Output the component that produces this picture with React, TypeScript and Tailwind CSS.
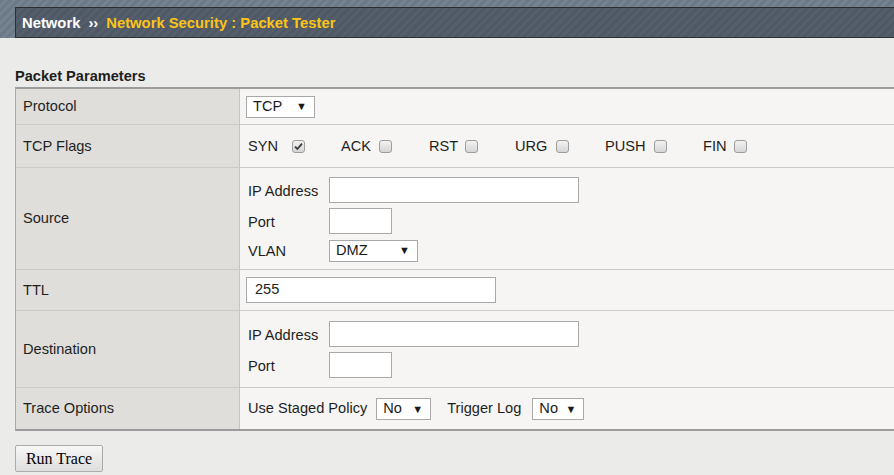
import React from "react";

const flags = [
  { name: "SYN", labelW: "w-[44px]", itemW: "w-[93px]", checked: true },
  { name: "ACK", labelW: "w-[38px]", itemW: "w-[88px]", checked: false },
  { name: "RST", labelW: "w-[36px]", itemW: "w-[86px]", checked: false },
  { name: "URG", labelW: "w-[41px]", itemW: "w-[90px]", checked: false },
  { name: "PUSH", labelW: "w-[49px]", itemW: "w-[98px]", checked: false },
  { name: "FIN", labelW: "w-[31px]", itemW: "w-[46px]", checked: false },
];

function Select({ value, width }: { value: string; width: string }) {
  return (
    <div
      className={`${width} h-[22px] bg-white border border-[#a9a9a9] flex items-center justify-between pl-[6px] pr-[7px] text-[#1a1a1a]`}
    >
      <span>{value}</span>
      <span className="text-[11px] leading-none">▼</span>
    </div>
  );
}

function Input({ width, value }: { width: string; value?: string }) {
  return (
    <div
      className={`${width} h-[26px] bg-white border border-[#a9a9a9] flex items-center pl-[8px] text-[#222]`}
    >
      {value}
    </div>
  );
}

function Checkbox({ checked }: { checked: boolean }) {
  return (
    <div className="w-[13px] h-[13px] shrink-0 rounded-[3px] border border-[#9d9d9d] bg-gradient-to-b from-[#f2f2f2] to-[#d6d6d6] flex items-center justify-center">
      {checked && (
        <svg width="9" height="9" viewBox="0 0 9 9">
          <path d="M1 4.6 L3.4 7 L8 1.6" fill="none" stroke="#3a3a3a" strokeWidth="1.8" />
        </svg>
      )}
    </div>
  );
}

function Row({
  label,
  h,
  first,
  children,
}: {
  label: string;
  h: string;
  first?: boolean;
  children: React.ReactNode;
}) {
  return (
    <div className={`flex ${h} ${first ? "" : "border-t border-[#cacaca]"}`}>
      <div className="w-[224px] shrink-0 bg-[#dfdedb] border-r border-[#c4c4c4] pl-[7px] pt-[1px] flex items-center">
        {label}
      </div>
      <div className="flex-1 bg-[#f6f5f3] pl-[6px] flex items-center">{children}</div>
    </div>
  );
}

export default function App() {
  return (
    <div className="w-[894px] h-[475px] overflow-hidden bg-[#ebebe9] font-['Liberation_Sans',Arial,sans-serif] text-[14.6px] text-[#1e1e1e]">
      {/* top bar */}
      <div className="h-[38px] pt-[7px] pl-[15px] bg-[repeating-linear-gradient(135deg,#6c7988_0px,#6c7988_3px,#76838f_3px,#76838f_6px)]">
        <div className="h-[31px] border border-[#2a2f35] border-r-0 flex items-center pl-[6px] pt-[1px] font-bold text-[14.8px] bg-[repeating-linear-gradient(135deg,#4e5965_0px,#4e5965_3px,#545f6b_3px,#545f6b_6px)]">
          <span className="text-white">Network</span>
          <span className="text-white mx-[8px]">››</span>
          <span className="text-[#fcc419]">Network Security : Packet Tester</span>
        </div>
      </div>

      <div className="pl-[15px]">
        <div className="mt-[28px] h-[21px] font-bold">Packet Parameters</div>

        <div className="border-t-2 border-b-2 border-[#9c9c9c] border-l border-l-[#a9a9a9]">
          <Row label="Protocol" h="h-[35px]" first>
            <Select value="TCP" width="w-[69px]" />
          </Row>

          <Row label="TCP Flags" h="h-[43px]">
            <div className="flex items-center pl-[2px] pt-[1px]">
              {flags.map((f) => (
                <div key={f.name} className={`${f.itemW} shrink-0 flex items-center`}>
                  <span className={`${f.labelW} shrink-0`}>{f.name}</span>
                  <Checkbox checked={f.checked} />
                </div>
              ))}
            </div>
          </Row>

          <Row label="Source" h="h-[102px]">
            <div className="grid grid-cols-[81px_auto] items-center gap-y-[5px] pl-[2px] pt-[3px]">
              <span className="pt-[3px]">IP Address</span>
              <Input width="w-[250px]" />
              <span className="pt-[3px]">Port</span>
              <Input width="w-[63px]" />
              <span className="pt-[2px]">VLAN</span>
              <Select value="DMZ" width="w-[89px]" />
            </div>
          </Row>

          <Row label="TTL" h="h-[41px]">
            <Input width="w-[250px]" value="255" />
          </Row>

          <Row label="Destination" h="h-[77px]">
            <div className="grid grid-cols-[81px_auto] items-center gap-y-[5px] pl-[2px] pt-[1px]">
              <span className="pt-[3px]">IP Address</span>
              <Input width="w-[250px]" />
              <span className="pt-[3px]">Port</span>
              <Input width="w-[63px]" />
            </div>
          </Row>

          <Row label="Trace Options" h="h-[42px]">
            <div className="flex items-center pl-[2px] pt-[1px]">
              <span className="mr-[9px]">Use Staged Policy</span>
              <Select value="No" width="w-[55px]" />
              <span className="ml-[16px] mr-[11px]">Trigger Log</span>
              <Select value="No" width="w-[52px]" />
            </div>
          </Row>
        </div>

        <button className="mt-[14px] w-[88px] h-[27px] border border-[#acacac] rounded-[2px] bg-gradient-to-b from-[#f7f7f7] to-[#dedede] font-['Liberation_Serif','Times_New_Roman',serif] text-[16px] text-black">
          Run Trace
        </button>
      </div>
    </div>
  );
}
